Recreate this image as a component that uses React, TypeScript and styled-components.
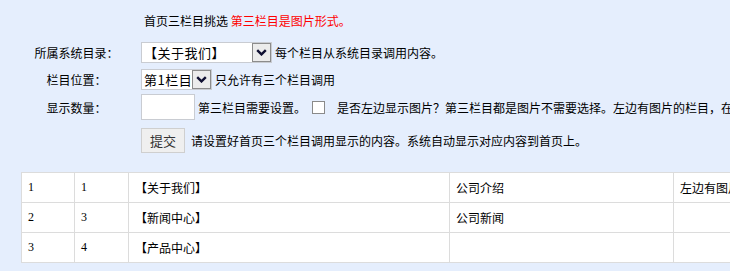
import styled, { createGlobalStyle } from 'styled-components'

const GlobalStyle = createGlobalStyle`
  html, body {
    margin: 0;
    padding: 0;
    background: #e5eefd;
    overflow: hidden;
  }
  body {
    font-family: "Noto Sans CJK SC", "Liberation Sans", sans-serif;
    font-size: 12px;
    color: #000;
  }
`

const Page = styled.div`
  width: 1000px;
`

const Form = styled.div`
  display: flex;
  flex-direction: column;
  padding-top: 8px;
  padding-left: 20px;
`

const Heading = styled.div`
  height: 24px;
  margin: 0 0 6px 124px;
  display: flex;
  align-items: center;
  white-space: nowrap;
`

const Row = styled.div<{ h: number }>`
  display: grid;
  grid-template-columns: 113px auto;
  column-gap: 8px;
  align-items: center;
  height: ${p => p.h}px;
  white-space: nowrap;
`

const Label = styled.div`
  text-align: center;
`

const Field = styled.div`
  display: flex;
  align-items: center;
  gap: 3px;
`

const Red = styled.span`
  color: #f00;
`

const SelectBox = styled.div<{ w: number }>`
  display: flex;
  align-items: stretch;
  width: ${p => p.w}px;
  height: 21px;
  box-sizing: border-box;
  border: 1px solid #c9ccd2;
  background: #fff;
`

const SelectValue = styled.div`
  flex: 1;
  display: flex;
  align-items: center;
  padding-left: 2px;
  font-size: 13px;
  letter-spacing: 0.5px;
  overflow: hidden;
`

const ArrowButton = styled.div`
  width: 19px;
  display: flex;
  align-items: center;
  justify-content: center;
  box-sizing: border-box;
  border: 1px solid #8c8c8c;
  background: #ececec;
`

const TextInput = styled.input`
  width: 54px;
  height: 26px;
  box-sizing: border-box;
  border: 1px solid #c9ccd2;
  background: #fff;
  margin: 0;
  padding: 0 3px;
`

const Check = styled.input`
  appearance: none;
  width: 13px;
  height: 13px;
  margin: 0 9px 0 3px;
  box-sizing: border-box;
  border: 1px solid #8a8a8a;
  background: #fff;
`

const SubmitButton = styled.button`
  width: 44px;
  height: 25px;
  margin: 0 3px 0 0;
  padding: 0;
  box-sizing: border-box;
  border: 1px solid #cfcfcf;
  background: #efefef;
  color: #333;
  font-family: "Noto Sans CJK SC", sans-serif;
  font-size: 13px;
`

const Table = styled.table`
  margin: 13px 0 0 21px;
  border-collapse: collapse;
  table-layout: fixed;
  width: 960px;
  background: #fff;
  font-family: "Liberation Serif", "Noto Sans CJK SC", serif;
  font-size: 12px;
`

const Cell = styled.td`
  height: 29px;
  padding: 0 6px;
  border: 1px solid #dcdcdc;
  white-space: nowrap;
  overflow: hidden;
`

const Chevron = () => (
  <svg width="11" height="7" viewBox="0 0 11 7">
    <path d="M1.2 1.2 L5.5 5.4 L9.8 1.2" fill="none" stroke="#111133" strokeWidth="2.4" />
  </svg>
)

function Select({ value, width }: { value: string; width: number }) {
  return (
    <SelectBox w={width}>
      <SelectValue>{value}</SelectValue>
      <ArrowButton>
        <Chevron />
      </ArrowButton>
    </SelectBox>
  )
}

const rows = [
  { a: '1', b: '1', name: '【关于我们】', note: '公司介绍', extra: '左边有图片' },
  { a: '2', b: '3', name: '【新闻中心】', note: '公司新闻', extra: '' },
  { a: '3', b: '4', name: '【产品中心】', note: '', extra: '' },
]

export default function App() {
  return (
    <Page>
      <GlobalStyle />
      <Form>
        <Heading>
          首页三栏目挑选&nbsp;<Red>第三栏目是图片形式。</Red>
        </Heading>
        <Row h={28}>
          <Label>所属系统目录：</Label>
          <Field>
            <Select value="【关于我们】" width={131} />
            <span>每个栏目从系统目录调用内容。</span>
          </Field>
        </Row>
        <Row h={26}>
          <Label>栏目位置：</Label>
          <Field>
            <Select value="第1栏目" width={71} />
            <span>只允许有三个栏目调用</span>
          </Field>
        </Row>
        <Row h={30}>
          <Label>显示数量：</Label>
          <Field>
            <TextInput type="text" />
            <span>第三栏目需要设置。</span>
            <Check type="checkbox" />
            <span>是否左边显示图片？第三栏目都是图片不需要选择。左边有图片的栏目，在首页显示图片。</span>
          </Field>
        </Row>
        <Row h={37}>
          <Label />
          <Field>
            <SubmitButton>提交</SubmitButton>
            <span>请设置好首页三个栏目调用显示的内容。系统自动显示对应内容到首页上。</span>
          </Field>
        </Row>
      </Form>
      <Table>
        <colgroup>
          <col style={{ width: 53 }} />
          <col style={{ width: 54 }} />
          <col style={{ width: 321 }} />
          <col style={{ width: 224 }} />
          <col />
        </colgroup>
        <tbody>
          {rows.map(r => (
            <tr key={r.a}>
              <Cell>{r.a}</Cell>
              <Cell>{r.b}</Cell>
              <Cell>{r.name}</Cell>
              <Cell>{r.note}</Cell>
              <Cell>{r.extra}</Cell>
            </tr>
          ))}
        </tbody>
      </Table>
    </Page>
  )
}
